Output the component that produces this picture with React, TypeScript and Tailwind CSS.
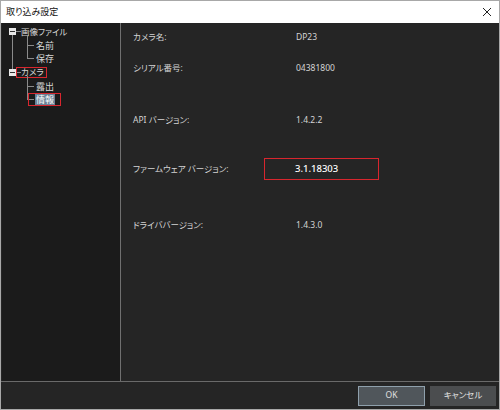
import React from 'react';

const jp = "font-['Noto_Sans','Noto_Sans_CJK_JP',sans-serif] [font-feature-settings:'palt']";

const TreeParent: React.FC<{ label: string; boxed?: boolean; lineDown?: boolean; lineUp?: boolean }> = ({
  label,
  boxed,
  lineDown,
  lineUp,
}) => (
  <div className="relative flex h-[13.6px] items-center">
    {lineUp && <span className="absolute left-[10px] top-0 h-1/2 border-l border-[#8a8a8a]" />}
    {lineDown && <span className="absolute left-[10px] top-1/2 h-1/2 border-l border-[#8a8a8a]" />}
    <span className="relative ml-[7px] flex h-[7px] w-[7px] items-center justify-center bg-[#e8e8e8]">
      <span className="h-px w-[5px] bg-[#333]" />
    </span>
    <span className={`flex h-[11px] items-center ${boxed ? 'border border-[#d8262e] pr-[2px]' : ''}`}>
      <span className={`h-px shrink-0 bg-[#8a8a8a] ${boxed ? 'w-[4px]' : 'w-[5px]'}`} />
      <span className="text-[8.5px] leading-none whitespace-nowrap text-[#d8d8d8]">{label}</span>
    </span>
  </div>
);

const TreeChild: React.FC<{ label: string; last?: boolean; parentLine?: boolean; selected?: boolean }> = ({
  label,
  last,
  parentLine,
  selected,
}) => (
  <div className="relative flex h-[13.6px] items-center">
    {parentLine && <span className="absolute left-[10px] top-0 h-full border-l border-[#8a8a8a]" />}
    <span className={`absolute left-[25px] top-[-3px] border-l border-[#8a8a8a] ${last ? 'h-[10px]' : 'h-[17px]'}`} />
    {selected ? (
      <span className="ml-[26px] flex h-[13px] w-[33px] items-center border border-[#d8262e]">
        <span className="h-px w-[5px] bg-[#8a8a8a]" />
        <span className="ml-px bg-[#6b8296] px-px text-[9px] leading-[11px] text-white">{label}</span>
      </span>
    ) : (
      <span className="ml-[26px] flex items-center">
        <span className="h-px w-[6px] bg-[#8a8a8a]" />
        <span className="ml-px px-px text-[9px] leading-[11px] text-[#d8d8d8]">{label}</span>
      </span>
    )}
  </div>
);

const InfoRow: React.FC<{ label: string; value: string; className?: string; highlight?: boolean }> = ({
  label,
  value,
  className,
  highlight,
}) => (
  <div className={`flex items-center ${className ?? ''}`}>
    <div className="w-[131px] text-[#d4d4d4]">{label}</div>
    {highlight ? (
      <div className="flex h-[22px] w-[115px] items-center border border-[#d8262e] pl-[30px] text-[9.5px] font-medium text-white">
        {value}
      </div>
    ) : (
      <div className="pl-[32px] text-[#d4d4d4]">{value}</div>
    )}
  </div>
);

export default function App() {
  return (
    <div className={`flex h-[410px] w-[500px] flex-col border border-[#a8a8a8] bg-[#252525] text-[8.5px] ${jp}`}>
      <div className="flex h-[22px] items-center justify-between bg-white pl-[5px] pr-[6px]">
        <span className="text-[9px] text-[#111]">取り込み設定</span>
        <svg width="10" height="10" viewBox="0 0 10 10" className="mr-[1px]">
          <path d="M1 1 L9 9 M9 1 L1 9" stroke="#222" strokeWidth="1" />
        </svg>
      </div>
      <div className="flex flex-1 border-b border-[#6a6a6a] px-px">
        <div className="w-[119px] border-r border-[#707070] bg-[#1b1b1b] pt-[2px]">
          <TreeParent label="画像ファイル" lineDown />
          <TreeChild label="名前" parentLine />
          <TreeChild label="保存" last parentLine />
          <TreeParent label="カメラ" boxed lineUp />
          <TreeChild label="露出" />
          <TreeChild label="情報" last selected />
        </div>
        <div className="flex flex-1 flex-col pl-[12px]">
          <InfoRow label="カメラ名:" value="DP23" className="mt-[4px] h-[20px]" />
          <InfoRow label="シリアル番号:" value="04381800" className="mt-[11px] h-[20px]" />
          <InfoRow label="API バージョン:" value="1.4.2.2" className="mt-[32px] h-[20px]" />
          <InfoRow label="ファームウェア バージョン:" value="3.1.18303" className="mt-[28px] h-[22px]" highlight />
          <InfoRow label="ドライババージョン:" value="1.4.3.0" className="mt-[35px] h-[20px]" />
        </div>
      </div>
      <div className="flex h-[27px] items-center justify-end gap-[5px] pr-[3px]">
        <button className="h-[20px] w-[67px] border border-[#8fa0ac] bg-[#50565b] text-[#e0e0e0]">OK</button>
        <button className="h-[20px] w-[66px] bg-[#4b4d4f] text-[#e0e0e0]">キャンセル</button>
      </div>
    </div>
  );
}
